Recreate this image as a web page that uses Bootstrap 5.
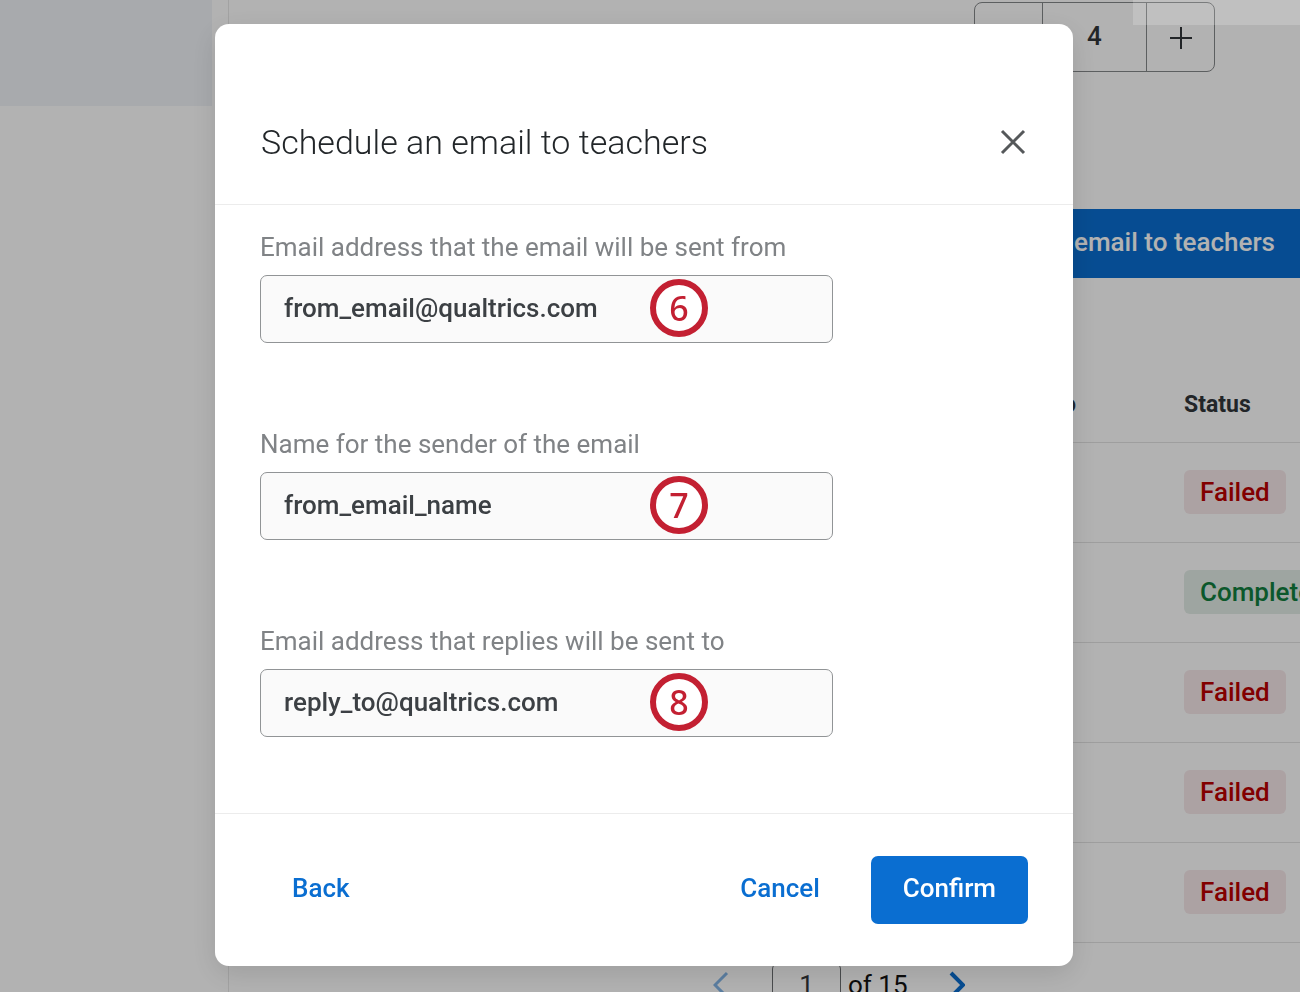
<!DOCTYPE html>
<html lang="en">
<head>
<meta charset="utf-8">
<meta name="viewport" content="width=device-width, initial-scale=1">
<title>Schedule an email to teachers</title>
<link href="https://cdn.jsdelivr.net/npm/bootstrap@5.3.0/dist/css/bootstrap.min.css" rel="stylesheet">
<style>
  :root { --ink: #32363a; --brand: #0a6ed1; --rule: #e8e8e8; }
  body { font-family: Roboto, "Liberation Sans", sans-serif; font-size: 26px; line-height: 40px; color: var(--ink); }

  /* page behind the dialog */
  .side-panel { width: 229px; border-right: 1px solid var(--rule); }
  .side-block { height: 106px; margin-right: 16px; background: #f1f4f8; }
  .stepper { margin: 2px 85px 0 0; height: 70px; border: 1px solid #85888a; border-radius: 8px; overflow: hidden; }
  .stepper button, .stepper input { border: 0; background: none; color: var(--ink); text-align: center; padding: 0 0 2px; }
  .stepper button { width: 67px; }
  .stepper input { width: 105px; border: solid #85888a; border-width: 0 1px; font-weight: 500; }
  .send-btn { margin-top: 137px; height: 69px; padding: 0 24px 2px; border-radius: 0; font-size: 26px; font-weight: 500; }
  .status-table { table-layout: fixed; margin-top: 90px; width: 1111px; }
  .status-table th { height: 74px; font-size: 23px; font-weight: 700; color: var(--ink); }
  .status-table td { height: 100px; }
  .status-table th, .status-table td { padding: 0 16px 0 0; vertical-align: middle; border-bottom: 1px solid #e2e2e2; }
  .status-table .col-to { width: 847px; }
  .status-table .col-gap { width: 108px; }
  .tag { display: inline-block; height: 44px; line-height: 44px; padding: 0 16px; border-radius: 6px; font-weight: 500; }
  .tag-fail { background: #f6e8ea; color: #bb0000; }
  .tag-done { background: #e3ece7; color: #107e3e; }
  .pager { margin: 20px 0 0 484px; }
  .page-box { width: 69px; height: 44px; margin-left: 43px; border: 1px solid #6a6d70; border-radius: 6px; text-align: center; padding: 0; color: var(--ink); background: none; }
  .page-count { margin: 0 41px 0 7px; color: #111; }
  .pager button { border: 0; background: none; padding: 0; line-height: 0; color: var(--brand); }
  .pager button:disabled { opacity: .5; }
  .top-sheen { position: fixed; top: 0; right: 0; width: 167px; height: 25px; background: rgba(255,255,255,.18); z-index: 1052; }

  /* dialog */
  .modal-backdrop { --bs-backdrop-opacity: .3; }
  .modal { padding-right: 12px; }
  .modal-dialog { max-width: 858px; margin: 24px auto; }
  .modal-content { border: 0; border-radius: 14px; box-shadow: 0 8px 28px rgba(0,0,0,.12); color: var(--ink); }
  .modal-header { padding: 92px 47px 36px 46px; border-color: #ececec; }
  .modal-title { font-size: 34px; line-height: 52px; font-weight: 300; color: #222629; }
  .close-btn { border: 0; background: none; padding: 0; line-height: 0; color: #55585a; }
  .modal-body { padding: 22px 45px 76px; }
  .field + .field { margin-top: 81px; }
  .field label { display: block; margin-bottom: 8px; color: #808386; }
  .field-box { max-width: 573px; }
  .field .form-control { height: 68px; padding: 0 23px 2px; font-size: 26px; font-weight: 500; color: #3c4044; background: #fafafa; border: 1px solid #919496; border-radius: 7px; }
  .step-mark { position: absolute; left: 390px; top: 4px; width: 58px; height: 58px; border: 6px solid #c32032; border-radius: 50%; background: #fff; color: #c32032; font: 500 34px/46px "Noto Sans", "Open Sans", sans-serif; text-align: center; }
  .modal-footer { padding: 42px 45px; border-color: #ececec; }
  .modal-footer > * { margin: 0; }
  .foot-btn { height: 68px; padding: 0 31px 3px; font-size: 26px; font-weight: 500; border-radius: 7px; text-decoration: none; color: var(--brand); }
  .btn-brand, .btn-brand:hover { background: var(--brand); color: #fff; }
  .modal-footer .btn-brand { margin-left: 19px; }
</style>
</head>
<body class="vh-100 overflow-hidden">
<div class="d-flex vh-100 overflow-hidden">
  <aside class="side-panel flex-shrink-0"><div class="side-block"></div></aside>
  <main class="flex-grow-1 overflow-hidden">
    <div class="d-flex justify-content-end">
      <div class="stepper d-flex">
        <button type="button" aria-label="Decrease"></button>
        <input type="text" value="4" aria-label="Quantity">
        <button type="button" aria-label="Increase"><svg width="22" height="22" viewBox="0 0 22 22" fill="none" stroke="currentColor" stroke-width="2"><path d="M11 0v22M0 11h22"/></svg></button>
      </div>
    </div>
    <div class="d-flex justify-content-end">
      <button type="button" class="btn btn-brand send-btn">Schedule an email to teachers</button>
    </div>
    <table class="status-table">
      <thead><tr><th class="col-to text-end p-0">Send to</th><th class="col-gap"></th><th>Status</th></tr></thead>
      <tbody>
        <tr><td></td><td></td><td><span class="tag tag-fail">Failed</span></td></tr>
        <tr><td></td><td></td><td><span class="tag tag-done">Complete</span></td></tr>
        <tr><td></td><td></td><td><span class="tag tag-fail">Failed</span></td></tr>
        <tr><td></td><td></td><td><span class="tag tag-fail">Failed</span></td></tr>
        <tr><td></td><td></td><td><span class="tag tag-fail">Failed</span></td></tr>
      </tbody>
    </table>
    <div class="pager d-flex align-items-center">
      <button type="button" disabled aria-label="Previous page"><svg width="16" height="28" viewBox="0 0 16 28" fill="none" stroke="currentColor" stroke-width="3"><path d="M14 2 2 14l12 12"/></svg></button>
      <input class="page-box" type="text" value="1" aria-label="Page">
      <span class="page-count">of 15</span>
      <button type="button" aria-label="Next page"><svg width="16" height="28" viewBox="0 0 16 28" fill="none" stroke="currentColor" stroke-width="4"><path d="m2 2 12 12L2 26"/></svg></button>
    </div>
  </main>
</div>

<div class="modal-backdrop show"></div>
<div class="top-sheen"></div>

<div class="modal d-block" role="dialog" aria-modal="true" aria-labelledby="dialogTitle">
  <div class="modal-dialog">
    <form class="modal-content">
      <div class="modal-header">
        <h1 class="modal-title" id="dialogTitle">Schedule an email to teachers</h1>
        <button type="button" class="close-btn" aria-label="Close"><svg width="26" height="26" viewBox="0 0 26 26" fill="none" stroke="currentColor" stroke-width="3"><path d="m2 2 22 22M24 2 2 24"/></svg></button>
      </div>
      <div class="modal-body">
        <div class="field">
          <label for="fromEmail">Email address that the email will be sent from</label>
          <div class="field-box position-relative"><input class="form-control" id="fromEmail" type="text" value="from_email@qualtrics.com"><span class="step-mark">6</span></div>
        </div>
        <div class="field">
          <label for="fromName">Name for the sender of the email</label>
          <div class="field-box position-relative"><input class="form-control" id="fromName" type="text" value="from_email_name"><span class="step-mark">7</span></div>
        </div>
        <div class="field">
          <label for="replyTo">Email address that replies will be sent to</label>
          <div class="field-box position-relative"><input class="form-control" id="replyTo" type="text" value="reply_to@qualtrics.com"><span class="step-mark">8</span></div>
        </div>
      </div>
      <div class="modal-footer">
        <button type="button" class="btn foot-btn me-auto">Back</button>
        <button type="button" class="btn foot-btn">Cancel</button>
        <button type="submit" class="btn btn-brand foot-btn">Confirm</button>
      </div>
    </form>
  </div>
</div>
<script src="https://cdn.jsdelivr.net/npm/bootstrap@5.3.0/dist/js/bootstrap.bundle.min.js"></script>
</body>
</html>
